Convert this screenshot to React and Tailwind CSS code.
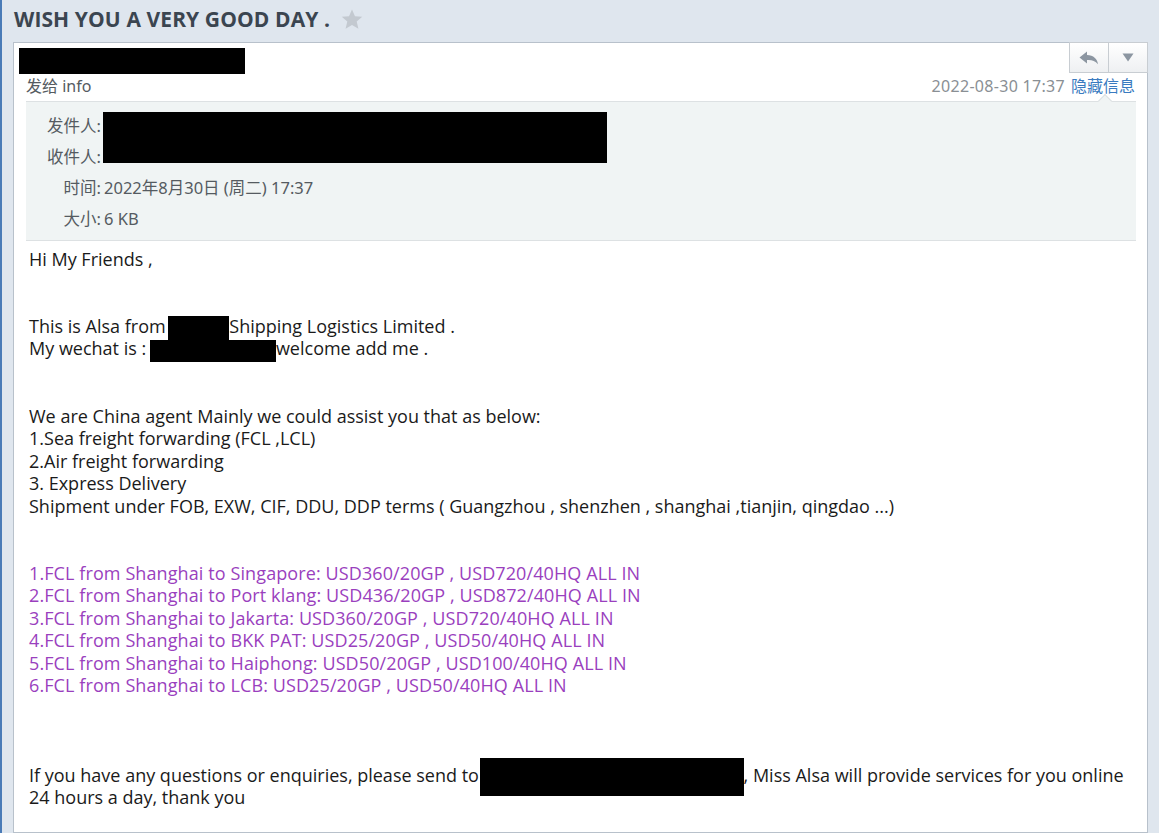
import React from "react";

const FONT = { fontFamily: '"Open Sans", "Noto Sans CJK SC", sans-serif' };
const CJK = { fontFamily: '"Noto Sans", "Noto Sans CJK SC", sans-serif' };

function Redact({ w, h, className = "" }) {
  return <span className={`inline-block bg-black align-middle ${className}`} style={{ width: w, height: h }} />;
}

const purple = [
  "1.FCL from Shanghai to Singapore: USD360/20GP , USD720/40HQ ALL IN",
  "2.FCL from Shanghai to Port klang: USD436/20GP , USD872/40HQ ALL IN",
  "3.FCL from Shanghai to Jakarta: USD360/20GP , USD720/40HQ ALL IN",
  "4.FCL from Shanghai to BKK PAT: USD25/20GP , USD50/40HQ ALL IN",
  "5.FCL from Shanghai to Haiphong: USD50/20GP , USD100/40HQ ALL IN",
  "6.FCL from Shanghai to LCB: USD25/20GP , USD50/40HQ ALL IN",
];

function Line({ children, className = "" }) {
  return <div className={`h-[22.45px] leading-[22.45px] whitespace-nowrap ${className}`}>{children}</div>;
}

export default function App() {
  return (
    <div className="w-[1159px] h-[833px] overflow-hidden bg-[#dfe6ee] flex">
      <div className="w-[2px] bg-[#4a7bb7] shrink-0" />
      <div className="flex-1 pl-[11px] pr-[11px] flex flex-col">
        <div className="h-[42px] flex items-center pl-[1px] pb-[3px] gap-[10px]">
          <span className="text-[21px] font-bold text-[#3b4550] tracking-[0.1px]" style={FONT}>
            WISH YOU A VERY GOOD DAY .
          </span>
          <svg width="24" height="23" viewBox="0 0 24 24" className="mt-[-1px]">
            <path d="M12 1.5l3.1 7.1 7.6.6-5.8 5 1.8 7.5L12 17.7l-6.7 4 1.8-7.5-5.8-5 7.6-.6z" fill="#c3c9d0" />
          </svg>
        </div>
        <div className="flex-1 bg-white border border-[#b8c1cb] relative" style={FONT}>
          <div className="absolute top-[-1px] right-[-1px] flex h-[31px]">
            <div className="w-[40px] h-full border border-[#c8cdd2] bg-gradient-to-b from-[#ffffff] to-[#eef0f2] flex items-center justify-center">
              <svg width="20" height="14" viewBox="0 0 20 14">
                <path d="M8 0.5 L0.5 6.5 L8 12.5 L8 9 C12.5 8.6 16 9.8 19 13.2 C18.3 7.6 14.5 4.4 8 4 Z" fill="#8c96a1" />
              </svg>
            </div>
            <div className="w-[39px] h-full border border-l-0 border-[#c8cdd2] bg-gradient-to-b from-[#ffffff] to-[#eef0f2] flex items-center justify-center">
              <svg width="12" height="9" viewBox="0 0 12 9">
                <path d="M0.5 0.5 H11.5 L6 8.5 Z" fill="#8c96a1" />
              </svg>
            </div>
          </div>

          <div className="pl-[5px] pt-[4px]">
            <Redact w={226} h={26} />
          </div>
          <div className="flex items-center justify-between pl-[12px] pr-[12px] h-[26px] mt-[-1px]" style={CJK}>
            <span className="text-[16px] text-[#555b61]">发给 info</span>
            <span className="text-[16px]">
              <span className="text-[#8a8f94] tracking-[0.3px]">2022-08-30 17:37</span>
              <span className="text-[#3a7bc0] ml-[6px]">隐藏信息</span>
            </span>
          </div>
          <div className="ml-[12px] mr-[11px] mt-[2px] relative bg-[#f0f4f4] border-t border-b border-[#dde1e3] h-[140px] pt-[9px]" style={CJK}>
            <div className="absolute top-[-6px] right-[26px] w-[10px] h-[10px] rotate-45 bg-[#f0f4f4] border-l border-t border-[#dde1e3]" />
            <div className="relative text-[16.5px] text-[#555b61]">
              <div className="h-[31px] flex items-center">
                <span className="w-[75px] text-right">发件人:</span>
              </div>
              <div className="h-[31px] flex items-center">
                <span className="w-[75px] text-right">收件人:</span>
              </div>
              <div className="h-[31px] flex items-center">
                <span className="w-[75px] text-right">时间:</span>
                <span className="ml-[3px]">2022年8月30日 (周二) 17:37</span>
              </div>
              <div className="h-[32px] flex items-center">
                <span className="w-[75px] text-right">大小:</span>
                <span className="ml-[3px]">6 KB</span>
              </div>
              <div className="absolute left-[77px] top-[1px] w-[504px] h-[51px] bg-black" />
            </div>
          </div>

          <div className="pl-[15px] pt-[7px] text-[18px] text-[#1a1a1a]">
            <Line>Hi My Friends ,</Line>
            <Line />
            <Line />
            <Line>
              This is Alsa from <Redact w={61} h={25} className="ml-[-2px] -my-[2px]" />Shipping Logistics Limited .
            </Line>
            <Line>
              My wechat is : <Redact w={126} h={22} className="ml-[-1px]" />welcome add me .
            </Line>
            <Line />
            <Line />
            <Line>We are China agent Mainly we could assist you that as below:</Line>
            <Line>1.Sea freight forwarding (FCL ,LCL)</Line>
            <Line>2.Air freight forwarding</Line>
            <Line>3. Express Delivery</Line>
            <Line>Shipment under FOB, EXW, CIF, DDU, DDP terms ( Guangzhou , shenzhen , shanghai ,tianjin, qingdao ...)</Line>
            <Line />
            <Line />
            {purple.map((t) => (
              <Line key={t} className="text-[#9a3fbe] tracking-[0.1px]">{t}</Line>
            ))}
            <Line />
            <Line />
            <Line />
            <Line>
              If you have any questions or enquiries, please send to <Redact w={264} h={38} className="ml-[-4px] -my-[9px]" />, Miss Alsa will provide services for you online
            </Line>
            <Line>24 hours a day, thank you</Line>
          </div>
        </div>
      </div>
    </div>
  );
}
